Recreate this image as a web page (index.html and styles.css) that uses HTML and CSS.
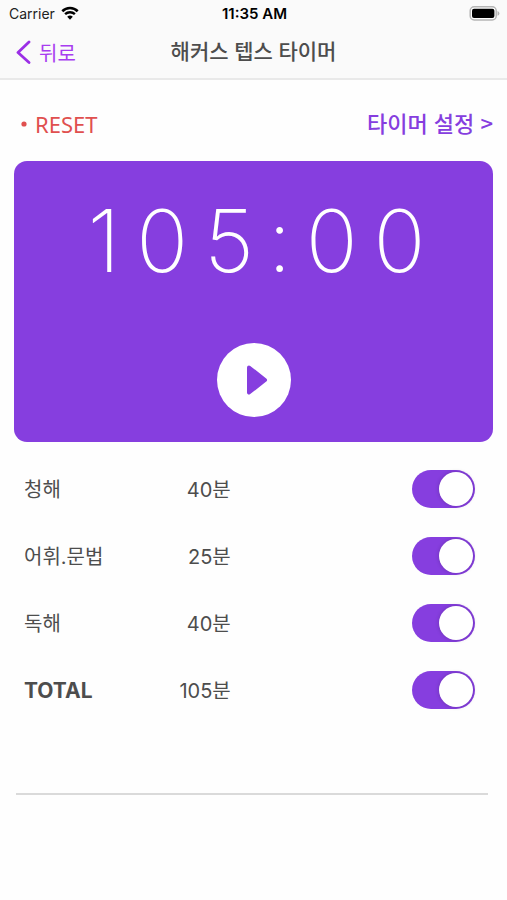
FILE: index.html
```html
<!DOCTYPE html>
<html lang="ko">
<head>
    <meta charset="UTF-8">
    <meta name="viewport" content="width=device-width, initial-scale=1.0">
    <title>해커스 텝스 타이머</title>
    <link rel="stylesheet" href="styles.css">
</head>
<body>
    <header class="top">
        <div class="status-bar">
            <div class="carrier">
                <span>Carrier</span>
                <svg class="wifi" viewBox="0 0 18 14" width="18" height="14">
                    <path d="M1.3 5.2 A11 11 0 0 1 16.7 5.2" fill="none" stroke="#000" stroke-width="2.6"/>
                    <path d="M4.1 8.2 A7 7 0 0 1 13.9 8.2" fill="none" stroke="#000" stroke-width="2.4"/>
                    <path d="M9 13.7 L6.2 10.8 A4 4 0 0 1 11.8 10.8 Z"/>
                </svg>
            </div>
            <div class="clock">11:35 AM</div>
            <svg class="battery" viewBox="0 0 31 15" width="31" height="15">
                <rect x="1.2" y="0.8" width="26" height="13.2" rx="4" fill="#fff" stroke="#b5b5b5" stroke-width="1.5"/>
                <rect x="3" y="2.8" width="22.4" height="9.2" rx="2"/>
                <path d="M28.5 5 Q30.4 5.8 30.4 7.4 Q30.4 9 28.5 9.8 Z" fill="#b5b5b5"/>
            </svg>
        </div>
        <nav class="nav-bar">
            <a href="#" class="back">
                <svg viewBox="0 0 16 24" width="16" height="24">
                    <path d="M14 2 L3 12.5 L14 22.5" fill="none" stroke="#9b2fe6" stroke-width="2.8" stroke-linecap="round" stroke-linejoin="round"/>
                </svg>
                <span>뒤로</span>
            </a>
            <h1 class="title">해커스 텝스 타이머</h1>
        </nav>
    </header>

    <main>
        <div class="actions">
            <button type="button" class="reset">
                <svg viewBox="0 0 6 6" width="6" height="6"><circle cx="3" cy="3" r="2.6" fill="#e0504f"/></svg>
                RESET
            </button>
            <a href="#" class="settings">타이머 설정 &gt;</a>
        </div>

        <section class="timer">
            <div class="time"><span>1</span><span>0</span><span>5</span><span class="colon">:</span><span>0</span><span>0</span></div>
            <button type="button" class="play" aria-label="시작">
                <svg viewBox="0 0 24 32" width="24" height="32">
                    <path d="M4 3.5 L20 16 L4 28.5 Z" fill="#863edf" stroke="#863edf" stroke-width="4" stroke-linejoin="round"/>
                </svg>
            </button>
        </section>

        <div class="sections">
            <div class="row">
                <label for="listening">청해</label>
                <span class="minutes">40분</span>
                <input type="checkbox" id="listening" class="switch" checked>
            </div>
            <div class="row">
                <label for="grammar">어휘.문법</label>
                <span class="minutes">25분</span>
                <input type="checkbox" id="grammar" class="switch" checked>
            </div>
            <div class="row">
                <label for="reading">독해</label>
                <span class="minutes">40분</span>
                <input type="checkbox" id="reading" class="switch" checked>
            </div>
            <div class="row">
                <label for="total" class="total">TOTAL</label>
                <span class="minutes">105분</span>
                <input type="checkbox" id="total" class="switch" checked>
            </div>
        </div>
        <hr class="divider">
    </main>
</body>
</html>
```

FILE: styles.css
```css
* {
    box-sizing: border-box;
}

body {
    margin: 0;
    font-family: Inter, "Noto Sans CJK KR", sans-serif;
    background-color: #fefefe;
    color: #4d4d4d;
}

button {
    padding: 0;
    border: none;
    background: none;
    cursor: pointer;
}

a {
    text-decoration: none;
}

svg {
    display: block;
}

.top {
    background-color: #fafafa;
    border-bottom: 2px solid #e9e9e9;
}

.status-bar {
    display: grid;
    grid-template-columns: 1fr auto 1fr;
    align-items: center;
    height: 26px;
    padding: 0 7px 0 9px;
    font-size: 14px;
    color: #000;
}

.carrier {
    display: flex;
    align-items: center;
    gap: 6px;
    color: #222;
}

.clock {
    font-size: 15px;
    font-weight: 600;
}

.battery {
    justify-self: end;
}

.nav-bar {
    display: grid;
    grid-template-columns: 1fr auto 1fr;
    align-items: center;
    height: 52px;
    padding: 0 15px;
}

.back {
    display: flex;
    align-items: center;
    gap: 8px;
    font-size: 20px;
    color: #a83cf0;
}

.title {
    margin: 0;
    font-size: 21px;
    font-weight: 500;
    line-height: 30px;
}

.actions {
    display: flex;
    justify-content: space-between;
    align-items: center;
    height: 81px;
    padding: 6px 14px 0 21px;
    line-height: 30px;
}

.reset {
    display: flex;
    align-items: center;
    gap: 8px;
    font-family: "Noto Sans", sans-serif;
    font-size: 22px;
    line-height: 30px;
    color: #e0504f;
}

.settings {
    padding-bottom: 4px;
    font-family: "Noto Sans CJK KR", sans-serif;
    font-size: 22px;
    font-weight: 500;
    color: #863edf;
}

.timer {
    display: flex;
    flex-direction: column;
    align-items: center;
    gap: 50px;
    margin: 0 14px;
    padding: 28px 0 25px;
    border-radius: 13px;
    background-color: #863edf;
}

.time {
    padding-left: 6px;
    font-size: 86px;
    font-weight: 200;
    line-height: 104px;
    color: #fff;
}

.time span {
    padding: 0 8px;
}

.time .colon {
    padding: 0 6px;
}

.play {
    display: flex;
    justify-content: center;
    align-items: center;
    width: 74px;
    height: 74px;
    padding-left: 6px;
    border-radius: 50%;
    background-color: #fff;
}

.sections {
    padding: 13px 32px 0 24px;
}

.row {
    display: grid;
    grid-template-columns: 6fr 5fr 13fr;
    align-items: center;
    height: 67px;
    font-size: 20px;
    line-height: 30px;
}

.row label,
.minutes {
    padding-top: 3px;
}

.minutes {
    text-align: right;
}

.total {
    font-size: 21px;
    font-weight: 700;
}

.switch {
    appearance: none;
    justify-self: end;
    display: flex;
    justify-content: flex-end;
    align-items: center;
    width: 63px;
    height: 38px;
    margin: 0;
    padding: 2px;
    border-radius: 19px;
    background-color: #863edf;
    cursor: pointer;
}

.switch::before {
    content: "";
    width: 34px;
    height: 34px;
    border-radius: 50%;
    background-color: #fff;
    box-shadow: 0 0 4px rgba(0, 0, 0, 0.2);
}

.switch:not(:checked) {
    justify-content: flex-start;
    background-color: #d8d8d8;
}

.divider {
    height: 2px;
    margin: 70px 19px 0 16px;
    border: none;
    background-color: #dadada;
}
```
